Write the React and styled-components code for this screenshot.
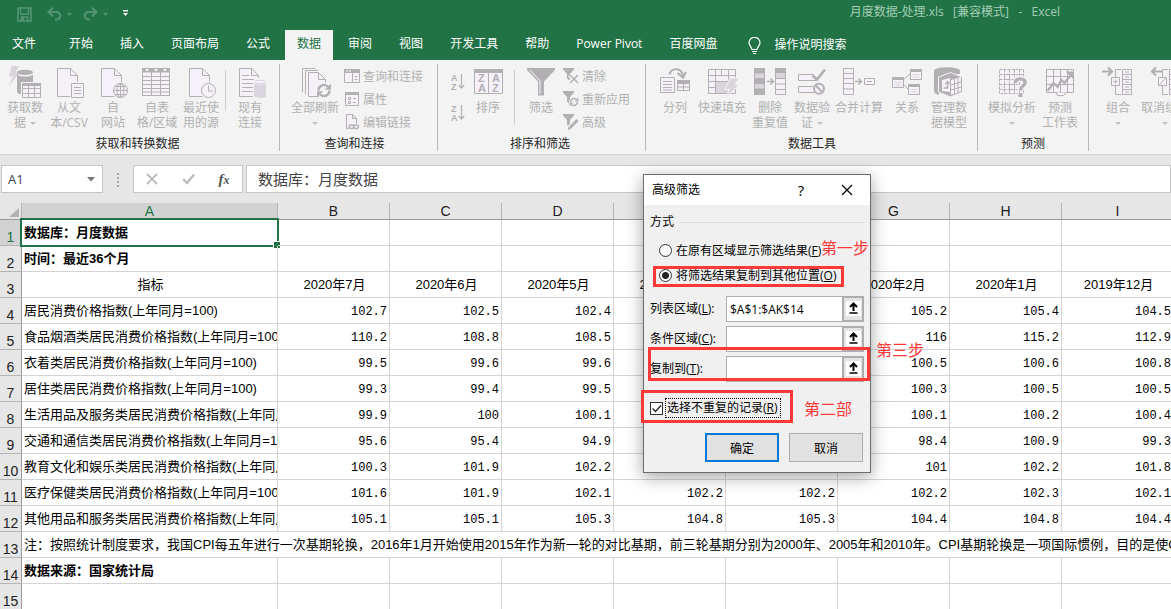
import { useState } from "react";
import styled, { createGlobalStyle } from "styled-components";

const UI_FONT = `"Open Sans", "Noto Sans CJK SC", sans-serif`;
const CELL_FONT = `"Liberation Sans", "Noto Sans CJK SC", sans-serif`;
const GREEN = "#217346";
const RED = "#fd3838";
const INK = "#b3b0b4";
const PALE = "#f6f1f8";
const SOFT = "#dad4dc";

const GlobalStyle = createGlobalStyle`
    * {
        box-sizing: border-box;
    }

    body {
        margin: 0;
        overflow: hidden;
        font-family: ${UI_FONT};
        font-size: 12px;
    }

    button, input {
        font: inherit;
        color: inherit;
    }

    button {
        padding: 0;
        border: 0;
        background: none;
    }
`;

const Window = styled.div`
    position: relative;
    display: flex;
    flex-direction: column;
    height: 100vh;
    background: white;
`;

/* title bar */

const TitleBar = styled.header`
    display: flex;
    align-items: center;
    justify-content: space-between;
    height: 30px;
    padding: 0 111px 6px 17px;
    background: ${GREEN};
`;

const QuickAccess = styled.div`
    display: flex;
    align-items: center;
    gap: 4px;
    padding-top: 4px;
`;

const QuickButton = styled.button`
    display: flex;
    margin-right: ${(props) => props.$space || 0}px;
    color: ${(props) => (props.$active ? "white" : "#569574")};
`;

const Title = styled.span`
    color: #a3cdb5;
    line-height: 20px;
    white-space: pre;
`;

/* tabs */

const TabBar = styled.nav`
    display: flex;
    gap: 3px;
    height: 30px;
    background: ${GREEN};
`;

const Tab = styled.button`
    flex: none;
    padding: 0 12px 3px;
    margin-right: ${(props) => props.$space || 0}px;
    color: ${(props) => (props.$active ? GREEN : "white")};
    background: ${(props) => (props.$active ? "#f3f3f3" : "transparent")};
    line-height: 27px;
    white-space: nowrap;
`;

const TellMe = styled.button`
    display: flex;
    align-items: center;
    gap: 13px;
    margin-left: 16px;
    padding-bottom: 3px;
    color: white;
    white-space: nowrap;

    svg {
        margin-top: 4px;
    }
`;

/* ribbon */

const Ribbon = styled.div`
    display: flex;
    flex: none;
    height: 95px;
    padding-top: 4px;
    overflow: hidden;
    background: #f3f3f3;
    border-bottom: 1px solid #d2d0d2;
`;

const Group = styled.section`
    display: flex;
    flex: none;
    flex-direction: column;
    justify-content: space-between;
    height: 87px;
    padding: 0 ${(props) => props.$right}px 0 ${(props) => props.$left}px;
    border-right: 1px solid #b8b8b8;

    &:last-child {
        border-right: 0;
    }
`;

const GroupBody = styled.div`
    display: flex;
`;

const GroupName = styled.div`
    color: #262626;
    line-height: 15px;
    text-align: center;
`;

const BigButton = styled.button`
    display: flex;
    flex: none;
    flex-direction: column;
    align-items: center;
    width: ${(props) => props.$width}px;
    padding-top: 2px;
    color: #b1b1b1;
    line-height: 15px;
    white-space: nowrap;

    svg {
        margin-bottom: 2px;
    }
`;

const SmallColumn = styled.div`
    display: flex;
    flex-direction: column;
`;

const SmallButton = styled.button`
    display: flex;
    align-items: center;
    gap: 3px;
    height: 23px;
    color: #b1b1b1;
    white-space: nowrap;
`;

const SortColumn = styled.div`
    display: flex;
    flex-direction: column;
    gap: 12px;
    padding-top: 8px;
`;

const SortButton = styled.button`
    display: flex;
`;

const Divider = styled.div`
    width: 1px;
    height: ${(props) => props.$height}px;
    margin: 6px ${(props) => props.$space}px 0;
    background: #d0ced0;
`;

const Caret = styled.i`
    display: inline-block;
    margin-left: ${(props) => (props.$alone ? 0 : 4)}px;
    border: 3px solid transparent;
    border-top-color: #c2c0c2;
    border-bottom: 0;
    vertical-align: middle;
`;

/* formula bar */

const FormulaBar = styled.div`
    display: flex;
    flex: none;
    align-items: flex-start;
    height: 48px;
    padding: 10px 0 0 1px;
    background: #e6e6e6;
    color: #444;
`;

const BarBox = styled.div`
    display: flex;
    align-items: center;
    flex: ${(props) => (props.$grow ? "1" : "none")};
    width: ${(props) => (props.$width ? `${props.$width}px` : "auto")};
    height: 28px;
    margin-left: ${(props) => (props.$grow ? 3 : 0)}px;
    background: white;
    border: 1px solid #c6c6c6;
`;

const NameInput = styled.input`
    width: 78px;
    padding: 0 0 0 6px;
    border: 0;
    outline: 0;
    background: transparent;
    font-size: 13px;
`;

const DropButton = styled.button`
    display: flex;
    justify-content: center;
    width: 22px;
`;

const Dots = styled.div`
    display: flex;
    flex-direction: column;
    align-items: center;
    gap: 2px;
    width: 30px;
    padding-top: 8px;

    i {
        width: 2px;
        height: 2px;
        background: #a8a8a8;
    }
`;

const BarButton = styled.button`
    display: flex;
    flex: 1;
    justify-content: center;
    color: #bdbdbd;
`;

const FunctionMark = styled.span`
    color: #555;
    font: italic bold 15px/20px "Liberation Serif", serif;

    small {
        font-size: 12px;
    }
`;

const FormulaInput = styled.input`
    width: 100%;
    padding: 0 0 2px 11px;
    border: 0;
    outline: 0;
    background: transparent;
    font-size: 15px;
`;

/* sheet */

const SheetArea = styled.main`
    flex: 1;
    min-height: 0;
    overflow: hidden;
`;

const Sheet = styled.table`
    width: 100%;
    min-width: 1174px;
    table-layout: fixed;
    border-collapse: separate;
    border-spacing: 0;
    font-family: ${CELL_FONT};
    font-size: 13px;
    color: black;
`;

const Col = styled.col`
    width: ${(props) => props.$width}px;
`;

const ColumnHead = styled.th`
    height: 17px;
    padding: 0;
    background: ${(props) => (props.$active ? "#d2d2d2" : "#e6e6e6")};
    border-right: 1px solid #b4b4b4;
    border-bottom: 1px solid #9b9b9b;
    color: ${(props) => (props.$active ? GREEN : "#222")};
    font-size: 14px;
    font-weight: normal;
    line-height: 16px;

    svg {
        display: block;
        margin: 4px 0 0 8px;
    }
`;

const RowHead = styled.th`
    height: 26px;
    padding: 0;
    background: ${(props) => (props.$active ? "#d2d2d2" : "#e6e6e6")};
    border-right: 1px solid #9b9b9b;
    border-bottom: 1px solid #b4b4b4;
    color: ${(props) => (props.$active ? GREEN : "#222")};
    font-size: 14px;
    font-weight: normal;
    line-height: 16px;
    text-align: center;
    vertical-align: bottom;
`;

const Cell = styled.td`
    position: relative;
    height: 26px;
    padding: ${(props) => (props.$align === "right" ? "0 2px" : "0 0 0 2px")};
    border-right: 1px solid #d4d4d4;
    border-bottom: 1px solid #d4d4d4;
    font-weight: ${(props) => (props.$bold ? "bold" : "normal")};
    text-align: ${(props) => props.$align || "left"};
`;

const CellText = styled.div`
    overflow: hidden;
    line-height: 20px;
    white-space: nowrap;
`;

const NumberText = styled.div`
    padding-top: 2px;
    font-family: "Liberation Mono", monospace;
    font-size: 12px;
    line-height: 20px;
`;

const Selection = styled.div`
    position: absolute;
    inset: -2px;
    border: 2px solid ${GREEN};

    &::after {
        content: "";
        position: absolute;
        right: -3px;
        bottom: -3px;
        width: 6px;
        height: 6px;
        background: ${GREEN};
        border: solid white;
        border-width: 1px 0 0 1px;
    }
`;

/* dialog */

const Dialog = styled.div`
    position: absolute;
    top: 174px;
    left: 643px;
    width: 228px;
    background: #f0f0f0;
    border: 1px solid #6c6c6c;
    box-shadow: 0 4px 16px rgba(0, 0, 0, 0.36);
    color: black;
`;

const DialogTitle = styled.div`
    display: flex;
    align-items: center;
    height: 30px;
    padding-left: 8px;
    background: white;

    h2 {
        flex: 1;
        margin: 0;
        font-size: 12px;
        font-weight: normal;
        line-height: 18px;
    }
`;

const DialogTool = styled.button`
    display: flex;
    align-items: center;
    justify-content: center;
    width: 46px;
    height: 30px;
    font-size: 15px;
`;

const DialogBody = styled.form`
    padding: 8px 6px 10px;
`;

const Mode = styled.fieldset`
    min-width: 0;
    margin: 0 0 8px;
    padding: 0;
    border: 0;

    legend {
        width: 100%;
        padding: 0;
        margin-bottom: 7px;
    }
`;

const ModeName = styled.span`
    display: flex;
    align-items: center;
    gap: 5px;
    line-height: 18px;

    &::after {
        content: "";
        flex: 1;
        height: 1px;
        background: #dcdcdc;
    }
`;

const RadioRow = styled.label`
    display: flex;
    align-items: center;
    gap: 4px;
    height: 25px;
    padding-left: 9px;
    line-height: 18px;
    white-space: nowrap;
`;

const Radio = styled.input`
    appearance: none;
    flex: none;
    width: 13px;
    height: 13px;
    margin: 0;
    background: white;
    border: 1px solid #333;
    border-radius: 50%;

    &:checked {
        background: radial-gradient(circle, #222 3px, white 4px);
    }
`;

const Fields = styled.div`
    display: grid;
    gap: 4px;
`;

const Field = styled.div`
    display: flex;
    align-items: center;
    min-width: 0;
    height: 26px;

    label {
        flex: none;
        width: 76px;
        line-height: 18px;
        white-space: nowrap;
    }
`;

const RangeBox = styled.div`
    display: flex;
    flex: 1;
    min-width: 0;
    height: 26px;
    background: white;
    border: 1px solid #adadb0;
`;

const RangeInput = styled.input`
    flex: 1;
    min-width: 0;
    padding: 0 3px;
    border: 0;
    outline: 0;
    background: white;
`;

const RangeButton = styled.button`
    display: flex;
    flex: none;
    align-items: center;
    justify-content: center;
    width: 21px;
    background: #e4e4e4;
    border: solid #adadb0;
    border-width: 1px 1px 1px 2px;

    svg {
        margin-bottom: 2px;
        background: white;
    }
`;

const CheckRow = styled.label`
    display: flex;
    align-items: center;
    gap: 3px;
    height: 20px;
    margin-top: 16px;
`;

const CheckText = styled.span`
    padding: 0 2px 0 1px;
    outline: 1px dotted black;
    line-height: 18px;
`;

const CheckBox = styled.span`
    display: grid;

    input {
        appearance: none;
        grid-area: 1 / 1;
        width: 13px;
        height: 13px;
        margin: 0;
        background: white;
        border: 1px solid #333;
    }

    svg {
        grid-area: 1 / 1;
        pointer-events: none;
    }

    input:not(:checked) + svg {
        display: none;
    }
`;

const Actions = styled.div`
    display: flex;
    justify-content: flex-end;
    gap: 10px;
    margin-top: 15px;
    padding-right: 1px;
`;

const ActionButton = styled.button`
    width: 74px;
    height: 29px;
    background: #e1e1e1;
    border: ${(props) => (props.$primary ? "2px solid #0078d7" : "1px solid #adadad")};
`;

const Frame = styled.div`
    position: absolute;
    top: ${(props) => props.$top}px;
    left: ${(props) => props.$left}px;
    width: ${(props) => props.$width}px;
    height: ${(props) => props.$height}px;
    border: 3px solid ${RED};
    pointer-events: none;
`;

const Step = styled.div`
    position: absolute;
    top: ${(props) => props.$top}px;
    left: ${(props) => props.$left}px;
    color: ${RED};
    font-size: 16px;
    line-height: 18px;
    white-space: nowrap;
    pointer-events: none;
`;

/* icons */

const Icon = ({ size = 32, width, height, children }) => (
    <svg
        width={width || size}
        height={height || size}
        viewBox={`0 0 ${width || size} ${height || size}`}
        fill="none"
        stroke={INK}
        aria-hidden="true"
    >
        {children}
    </svg>
);

const Page = ({ x = 4.5, y = 2.5, w = 20, h = 28 }) => (
    <>
        <path d={`M${x} ${y}h${w - 7}l7 7v${h - 7}h-${w}z`} fill={PALE} />
        <path d={`M${x + w - 7} ${y}v7h7`} />
    </>
);

const Refresh = ({ x, y, r = 5.5 }) => (
    <g transform={`translate(${x} ${y}) scale(${r / 5.5})`}>
        <circle r="8" fill="#f3f3f3" stroke="none" />
        <path d="M-5.5 0A5.5 5.5 0 0 1 4 -3.8M5.5 0A5.5 5.5 0 0 1 -4 3.8" strokeWidth="2.4" />
        <path d="M7 -7v6.2h-6.2zM-7 7v-6.2h6.2z" fill={INK} stroke="none" />
    </g>
);

const GetDataIcon = () => (
    <Icon>
        <path d="M2.5 0h7.5l-3.4 6.5h4L.3 19.5 3.8 10.5H0z" fill={SOFT} stroke="none" />
        <path d="M8 8c0 3.4 16 3.4 16 0v18c0 3.4-16 3.4-16 0z" fill={INK} stroke="none" />
        <ellipse cx="16" cy="6.4" rx="8" ry="2.7" fill={INK} stroke="none" />
        <path d="M12 16h20v16H12z" fill="#f3f3f3" stroke="none" />
        <path d="M13.5 18.5h18v13h-18zM19.5 18.5v13M25.5 18.5v13M13.5 22.5h18M13.5 27.5h18" fill={PALE} />
        <path d="M13 17h19v3H13z" fill={INK} stroke="none" />
    </Icon>
);

const TextFileIcon = () => (
    <Icon>
        <Page />
        <path d="M17 16h15v16H17z" fill="#f3f3f3" stroke="none" />
        <path d="M18.5 17.5h12v14h-12z" fill={PALE} />
        <path d="M21 21.5h7M21 24.5h7M21 27.5h7" />
    </Icon>
);

const WebIcon = () => (
    <Icon>
        <Page />
        <circle cx="23.5" cy="24.5" r="8.4" fill="#f3f3f3" stroke="none" />
        <circle cx="23.5" cy="24.5" r="7" fill={PALE} />
        <path d="M16.5 24.5h14M23.5 17.5v14M18 20.5h11M18 28.5h11" />
        <ellipse cx="23.5" cy="24.5" rx="3.5" ry="7" />
    </Icon>
);

const TableIcon = () => (
    <Icon>
        <path
            d="M1.5 2.5h27v27h-27zM10.5 6v23.5M19.5 6v23.5M1.5 10.5h27M1.5 14.5h27M1.5 18.5h27M1.5 22.5h27M1.5 26h27"
            fill={PALE}
        />
        <path d="M1 2h28v4.5H1z" fill={INK} stroke="none" />
        <path d="M4 3h4l-2 2.5zM13 3h4l-2 2.5zM22 3h4l-2 2.5z" fill="white" stroke="none" />
    </Icon>
);

const RecentIcon = () => (
    <Icon>
        <Page />
        <circle cx="23.5" cy="24.5" r="8.4" fill="#f3f3f3" stroke="none" />
        <circle cx="23.5" cy="24.5" r="7" fill={PALE} />
        <path d="M23.5 19.5v5.5h4.5" />
    </Icon>
);

const ConnectionIcon = () => (
    <Icon>
        <Page x={5.5} w={19} />
        <path d="M8 9.5h7M8 13.5h13M8 17.5h11M8 21.5h11M8 25.5h11" />
        <path d="M19 15c0-4 13-4 13 0v17H19z" fill="#f3f3f3" stroke="none" />
        <path d="M20 17c0 2 12 2 12 0v13c0 2.3-12 2.3-12 0z" fill={SOFT} stroke="none" />
        <ellipse cx="26" cy="16" rx="5.5" ry="1.8" fill={PALE} stroke={SOFT} />
    </Icon>
);

const RefreshAllIcon = () => (
    <Icon>
        <path d="M3.5 26V2.5h13M6.5 28.5v-24h13" />
        <Page x={9.5} y={6.5} w={17} h={24} />
        <Refresh x={25} y={24.5} />
    </Icon>
);

const QueriesIcon = () => (
    <Icon size={16}>
        <path d="M.5 2.5h15v12H.5z" fill={PALE} />
        <path d="M0 1h16v4H0z" fill={INK} stroke="none" />
        <path d="M2 3h2M5 3h2" stroke="white" />
        <path d="M8.5 5v9.5M10.5 8.5h3M10.5 11.5h3" />
    </Icon>
);

const PropertiesIcon = () => (
    <Icon size={16}>
        <path d="M1.5 1.5h13v13h-13z" fill={PALE} />
        <path d="M1 1h14v3H1z" fill={INK} stroke="none" />
        <path d="M4.5 6.5h2v2h-2zM4.5 10.5h2v2h-2zM9 7.5h3M9 11.5h3" />
    </Icon>
);

const LinksIcon = () => (
    <Icon size={16}>
        <path d="M2.5 14.5v-14h6l4 4v5M8.5.5v4h4M2.5 14.5h2" fill={PALE} />
        <rect x="5" y="11" width="5" height="3.5" rx="1.7" strokeWidth="1.5" />
        <rect x="9.5" y="11" width="5" height="3.5" rx="1.7" strokeWidth="1.5" />
    </Icon>
);

const SortIcon = ({ first, second }) => (
    <Icon width={16} height={19}>
        <g fill={INK} stroke="none" fontFamily="Liberation Sans, sans-serif" fontSize="9" fontWeight="bold">
            <text x="1" y="9">{first}</text>
            <text x="1" y="18">{second}</text>
        </g>
        <path d="M11.5 2v14M8.8 13l2.7 3 2.7-3" strokeWidth="1.2" />
    </Icon>
);

const SortDialogIcon = () => (
    <Icon>
        <path d="M2.5 3.5h28v24h-28zM16.5 4v23.5" fill={PALE} />
        <path d="M2 3h29v4H2z" fill={INK} stroke="none" />
        <g fill={INK} stroke="none" fontFamily="Liberation Sans, sans-serif" fontSize="11" fontWeight="bold">
            <text x="6" y="16">Z</text>
            <text x="6" y="26">A</text>
            <text x="20" y="16">A</text>
            <text x="20" y="26">Z</text>
        </g>
    </Icon>
);

const FilterIcon = () => (
    <Icon>
        <path d="M2 2h28v2L19 15.5V29.5h-6V15.5L2 4z" fill={INK} stroke="none" />
        <path d="M5 4l10 11v13" stroke={PALE} />
    </Icon>
);

const SmallFunnel = () => (
    <path d="M0 0h11v1.5L7 6v7L4 10.5V6L0 1.5z" fill={INK} stroke="none" />
);

const ClearIcon = () => (
    <Icon size={16}>
        <SmallFunnel />
        <path d="M6.5 7l8 7.5M14.5 7l-8 7.5" stroke="#f3f3f3" strokeWidth="4" />
        <path d="M7 7l8 8M15 7l-8 8" strokeWidth="1.5" />
    </Icon>
);

const ReapplyIcon = () => (
    <Icon size={16}>
        <SmallFunnel />
        <Refresh x={11} y={11} r={3.5} />
    </Icon>
);

const AdvancedIcon = () => (
    <Icon size={16}>
        <SmallFunnel />
        <path d="M5.5 15.5L15 5.5" stroke="#f3f3f3" strokeWidth="6" />
        <path d="M7 13.8L14.5 6" strokeWidth="3" />
        <path d="M4.5 16l1-3.5 2.5 2.5z" fill={INK} stroke="none" />
    </Icon>
);

const SplitIcon = () => (
    <Icon>
        <path d="M10.5 8.5c1-6.5 12-8 13.5 1.5" strokeWidth="2.2" />
        <path d="M18.5 7l5.5 4.5L27 6" strokeWidth="2.2" />
        <path d="M1.5 11.5h14v15h-14z" fill={PALE} />
        <path d="M4 15.5h9M4 18.5h9M4 21.5h9M4 24h9" />
        <path d="M18.5 14.5h12v10h-12zM24.5 15v9.5M18.5 21h12" fill={PALE} />
        <path d="M18 14h13v4H18z" fill={INK} stroke="none" />
    </Icon>
);

const FlashFillIcon = () => (
    <Icon>
        <path
            d="M2.5 3.5h27v24h-27zM9.5 3.5v24M22.5 3.5v6M2.5 9.5h27M2.5 15.5h27M2.5 21.5h20M15.5 3.5v6"
            fill={PALE}
        />
        <path d="M10 16h12v11H10z" fill={SOFT} stroke="none" />
        <path d="M9.5 9.5h13v6h-13z" fill={PALE} />
        <path d="M24 12h9l-4 7h4L20 32l3.5-8.5H19z" fill={SOFT} stroke="#f3f3f3" />
    </Icon>
);

const RemoveDuplicatesIcon = () => (
    <Icon>
        <path d="M0 2h11v27H0z" fill={INK} stroke="none" />
        <path d="M1 7.5h9v4.5H1zM1 18h9v4.5H1z" fill={SOFT} stroke="none" />
        <path d="M13 15.5h6M16.5 12.5l3 3-3 3" strokeWidth="1.5" />
        <path d="M21.5 2.5h10v26h-10zM21.5 12.5h10M21.5 18h10M21.5 23.5h10" fill={PALE} />
        <path d="M21 2h11v5.5H21z" fill={INK} stroke="none" />
        <path d="M22 7.5h9V12h-9z" fill={SOFT} stroke="none" />
    </Icon>
);

const ValidationIcon = () => (
    <Icon>
        <path d="M18 8.5H2.5v6H20M17 20.5H2.5v6H18" fill={PALE} />
        <path d="M16.5 9.5l4.5 4L29 3.5" strokeWidth="2.8" />
        <circle cx="23" cy="22.8" r="5" fill={PALE} strokeWidth="2" />
        <path d="M19.5 19.3l7 7" strokeWidth="2" />
    </Icon>
);

const ConsolidateIcon = () => (
    <Icon>
        <path d="M.5 2.5h10v26H.5zM.5 7.5h10M.5 12.5h10M.5 17.5h10M.5 23h10" fill={PALE} />
        <path d="M12 15.5h6M15.5 12.5l3 3-3 3" strokeWidth="1.5" />
        <path d="M21.5 12.5h10v6h-10z" fill={PALE} />
        <path d="M24 15.5h5" />
    </Icon>
);

const RelationWindow = ({ x, y }) => (
    <g transform={`translate(${x} ${y})`}>
        <path d="M.5.5h11v10H.5z" fill={PALE} />
        <path d="M0 0h12v3H0z" fill={INK} stroke="none" />
        <path d="M2.5 5.5h7M2.5 8h7" stroke={SOFT} />
    </g>
);

const RelationIcon = () => (
    <Icon>
        <path d="M12 14l7-6M12 18l6 6" />
        <RelationWindow x={1} y={11} />
        <RelationWindow x={19} y={3} />
        <RelationWindow x={17} y={18} />
    </Icon>
);

const ModelIcon = () => (
    <Icon>
        <path d="M1 5C1 0 27 0 27 5v3H15L6 12v17c-3-1-5-2-5-4z" fill={INK} stroke="none" />
        <path d="M5.5 11l12-4.5 12 4.5v15l-12 5-12-5z" fill={INK} stroke="#f3f3f3" />
        <path d="M18 14l10-3v14l-10 4z" fill={PALE} stroke="none" />
        <path d="M18 19l10-3M18 24l10-3M21.5 13v15M25 12v14.5" />
        <path d="M9 14l8-2v14l-8-1z" fill={PALE} stroke="none" />
        <path d="M10.5 22h4v-6M12.3 18l2.2-2.5 2 2.5" strokeWidth="1.4" />
    </Icon>
);

const WhatIfIcon = () => (
    <Icon>
        <path
            d="M3.5 3.5h24v24h-24zM8.5 3.5v24M13.5 3.5v24M18.5 3.5v24M23.5 3.5v24M3.5 8.5h24M3.5 13.5h24M3.5 18.5h24M3.5 23.5h24"
            fill={PALE}
            strokeDasharray="3 1"
        />
        <path d="M8.5 8.5h5v5h-5zM13.5 18.5h5v5h-5z" />
        <path d="M19 17c1-6 11-5 10 0-.5 3-4.5 3-4.5 7.5M24.5 27v4" stroke="#f3f3f3" strokeWidth="6" />
        <path d="M19 17c1-6 11-5 10 0-.5 3-4.5 3-4.5 7.5" strokeWidth="3.4" />
        <path d="M22.5 27h4v4h-4z" fill={INK} stroke="none" />
    </Icon>
);

const ForecastIcon = () => (
    <Icon>
        <path d="M2.5 3.5h27v23h-27zM9.5 3.5v23M16.5 3.5v23M23.5 3.5v23M2.5 10.5h27M2.5 18.5h27" fill={PALE} />
        <path d="M12 26.5l1.5 3h6l3-3" fill={PALE} />
        <path d="M3.5 25l6-8 4 4 4-7 3 3 7-9" strokeWidth="2.2" />
        <path d="M21.5 5.5H29V13z" fill={INK} stroke="none" />
    </Icon>
);

const GroupIcon = ({ remove }) => (
    <Icon>
        {remove ? (
            <path d="M13 5.5H3M7 1.5l-4 4 4 4" strokeWidth="2.2" />
        ) : (
            <path d="M0 5.5h9M6 1.5l4 4-4 4" strokeWidth="2.2" />
        )}
        <path d="M19 3.5h-5.5V11M13.5 20v8.5H19" />
        <path d="M9.5 11.5h8v8h-8z" fill={PALE} />
        <path d={remove ? "M10.5 18.5l6-6" : "M11.5 15.5h4M13.5 13.5v4"} />
        <path d="M20.5 3.5h9v25h-9zM20.5 8.5h9M20.5 13.5h9M20.5 18.5h9M20.5 23.5h9" fill={PALE} />
        <path d="M23 6h4M23 11h4M23 16h4M23 21h4M23 26h4" />
    </Icon>
);

const SaveIcon = () => (
    <svg width="15" height="15" fill="none" stroke="currentColor" strokeWidth="1.5">
        <path d="M1 1h13v13H1zM3.5 1v6h8V1M4.5 14v-4h6v4" />
        <path d="M5 11h2v2H5z" fill="currentColor" stroke="none" />
    </svg>
);

const UndoIcon = ({ flip }) => (
    <svg width="15" height="14" fill="none" stroke="currentColor" strokeWidth="2">
        <g transform={flip ? "translate(15 0) scale(-1 1)" : undefined}>
            <path d="M6 .8L1.5 5 6 9.2M2 5h7c6 0 6 7.5-1 7.5" />
        </g>
    </svg>
);

const DownIcon = ({ bar }) => (
    <svg width="7" height="8" fill="currentColor">
        {bar && <path d="M1 0h5v1.5H1z" />}
        <path d="M1 3h5L3.5 6z" />
    </svg>
);

const BulbIcon = () => (
    <svg width="13" height="18" fill="none" stroke="currentColor" strokeWidth="1.2">
        <path d="M4 12.5C4 10 1 9 1 5.8a5.3 5.3 0 0 1 11 0C12 9 9 10 9 12.5zM4 14.5h5M5 16.5h3" />
    </svg>
);

/* data */

const TABS = ["文件", "开始", "插入", "页面布局", "公式", "数据", "审阅", "视图", "开发工具", "帮助", "Power Pivot", "百度网盘"];

const COLUMNS = ["A", "B", "C", "D", "E", "F", "G", "H", "I"];

const ROWS = [
    { label: "数据库：月度数据", bold: true },
    { label: "时间：最近36个月", bold: true },
    {
        label: "指标",
        heading: true,
        values: ["2020年7月", "2020年6月", "2020年5月", "2020年4月", "", "2020年2月", "2020年1月", "2019年12月"],
    },
    { label: "居民消费价格指数(上年同月=100)", values: ["102.7", "102.5", "102.4", "", "", "105.2", "105.4", "104.5"] },
    { label: "食品烟酒类居民消费价格指数(上年同月=100)", values: ["110.2", "108.8", "108.5", "", "", "116", "115.2", "112.9"] },
    { label: "衣着类居民消费价格指数(上年同月=100)", values: ["99.5", "99.6", "99.6", "", "", "100.5", "100.6", "100.8"] },
    { label: "居住类居民消费价格指数(上年同月=100)", values: ["99.3", "99.4", "99.5", "", "", "100.3", "100.5", "100.5"] },
    { label: "生活用品及服务类居民消费价格指数(上年同月=100)", values: ["99.9", "100", "100.1", "", "", "100.1", "100.2", "100.4"] },
    { label: "交通和通信类居民消费价格指数(上年同月=100)", values: ["95.6", "95.4", "94.9", "", "", "98.4", "100.9", "99.3"] },
    { label: "教育文化和娱乐类居民消费价格指数(上年同月=100)", values: ["100.3", "101.9", "102.2", "", "", "101", "102.2", "101.8"] },
    { label: "医疗保健类居民消费价格指数(上年同月=100)", values: ["101.6", "101.9", "102.1", "102.2", "102.2", "102.2", "102.3", "102.1"] },
    { label: "其他用品和服务类居民消费价格指数(上年同月=100)", values: ["105.1", "105.1", "105.3", "104.8", "105.3", "104.4", "104.8", "104.4"] },
    {
        label: "注：按照统计制度要求，我国CPI每五年进行一次基期轮换，2016年1月开始使用2015年作为新一轮的对比基期，前三轮基期分别为2000年、2005年和2010年。CPI基期轮换是一项国际惯例，目的是使C",
        wide: true,
    },
    { label: "数据来源：国家统计局", bold: true },
    { label: "" },
];

const RibbonButton = ({ icon, lines, width = 44, caret }) => (
    <BigButton type="button" $width={width}>
        {icon}
        <span>{lines[0]}</span>
        {(lines[1] || caret) && (
            <span>
                {lines[1]}
                {caret && <Caret $alone={!lines[1]} />}
            </span>
        )}
    </BigButton>
);

const RibbonComponent = () => (
    <Ribbon>
        <Group $left={3} $right={7}>
            <GroupBody>
                <RibbonButton icon={<GetDataIcon />} lines={["获取数", "据"]} caret />
                <RibbonButton icon={<TextFileIcon />} lines={["从文", "本/CSV"]} />
                <RibbonButton icon={<WebIcon />} lines={["自", "网站"]} />
                <RibbonButton icon={<TableIcon />} lines={["自表", "格/区域"]} />
                <RibbonButton icon={<RecentIcon />} lines={["最近使", "用的源"]} />
                <Divider $height={41} $space={2} />
                <RibbonButton icon={<ConnectionIcon />} lines={["现有", "连接"]} />
            </GroupBody>
            <GroupName>获取和转换数据</GroupName>
        </Group>

        <Group $left={6} $right={14}>
            <GroupBody>
                <RibbonButton icon={<RefreshAllIcon />} lines={["全部刷新"]} width={58} caret />
                <SmallColumn>
                    <SmallButton type="button"><QueriesIcon />查询和连接</SmallButton>
                    <SmallButton type="button"><PropertiesIcon />属性</SmallButton>
                    <SmallButton type="button"><LinksIcon />编辑链接</SmallButton>
                </SmallColumn>
            </GroupBody>
            <GroupName>查询和连接</GroupName>
        </Group>

        <Group $left={12} $right={15}>
            <GroupBody>
                <SortColumn>
                    <SortButton type="button"><SortIcon first="A" second="Z" /></SortButton>
                    <SortButton type="button"><SortIcon first="Z" second="A" /></SortButton>
                </SortColumn>
                <RibbonButton icon={<SortDialogIcon />} lines={["排序"]} />
                <Divider $height={55} $space={4} />
                <RibbonButton icon={<FilterIcon />} lines={["筛选"]} />
                <SmallColumn>
                    <SmallButton type="button"><ClearIcon />清除</SmallButton>
                    <SmallButton type="button"><ReapplyIcon />重新应用</SmallButton>
                    <SmallButton type="button"><AdvancedIcon />高级</SmallButton>
                </SmallColumn>
            </GroupBody>
            <GroupName>排序和筛选</GroupName>
        </Group>

        <Group $left={9} $right={8}>
            <GroupBody>
                <RibbonButton icon={<SplitIcon />} lines={["分列"]} width={40} />
                <RibbonButton icon={<FlashFillIcon />} lines={["快速填充"]} width={54} />
                <RibbonButton icon={<RemoveDuplicatesIcon />} lines={["删除", "重复值"]} width={42} />
                <RibbonButton icon={<ValidationIcon />} lines={["数据验", "证"]} width={42} caret />
                <RibbonButton icon={<ConsolidateIcon />} lines={["合并计算"]} width={52} />
                <RibbonButton icon={<RelationIcon />} lines={["关系"]} />
                <RibbonButton icon={<ModelIcon />} lines={["管理数", "据模型"]} width={40} />
            </GroupBody>
            <GroupName>数据工具</GroupName>
        </Group>

        <Group $left={7} $right={7}>
            <GroupBody>
                <RibbonButton icon={<WhatIfIcon />} lines={["模拟分析"]} width={54} caret />
                <RibbonButton icon={<ForecastIcon />} lines={["预测", "工作表"]} width={42} />
            </GroupBody>
            <GroupName>预测</GroupName>
        </Group>

        <Group $left={9} $right={0}>
            <GroupBody>
                <RibbonButton icon={<GroupIcon />} lines={["组合"]} width={40} caret />
                <RibbonButton icon={<GroupIcon remove />} lines={["取消组合"]} width={54} caret />
            </GroupBody>
        </Group>
    </Ribbon>
);

const SheetComponent = () => (
    <SheetArea>
        <Sheet>
            <colgroup>
                <Col $width={22} />
                <Col $width={256} />
                {COLUMNS.slice(1).map((name) => <Col key={name} $width={112} />)}
                <col />
            </colgroup>
            <thead>
                <tr>
                    <ColumnHead>
                        <svg width="11" height="10"><path d="M11 0v9H1z" fill="#b4b4b4" /></svg>
                    </ColumnHead>
                    {COLUMNS.map((name) => (
                        <ColumnHead key={name} scope="col" $active={name === "A"}>{name}</ColumnHead>
                    ))}
                    <ColumnHead />
                </tr>
            </thead>
            <tbody>
                {ROWS.map((row, index) => (
                    <tr key={index}>
                        <RowHead scope="row" $active={index === 0}>{index + 1}</RowHead>
                        <Cell
                            colSpan={row.wide ? 10 : 1}
                            $bold={row.bold}
                            $align={row.heading ? "center" : "left"}
                        >
                            <CellText>{row.label}</CellText>
                            {index === 0 && <Selection />}
                        </Cell>
                        {!row.wide && COLUMNS.slice(1).map((name, i) => (
                            <Cell key={name} $align={row.heading ? "center" : "right"}>
                                {row.heading
                                    ? <CellText>{row.values[i]}</CellText>
                                    : <NumberText>{row.values?.[i]}</NumberText>}
                            </Cell>
                        ))}
                        {!row.wide && <Cell />}
                    </tr>
                ))}
            </tbody>
        </Sheet>
    </SheetArea>
);

const RangeField = ({ id, label, hotkey, value }) => (
    <Field>
        <label htmlFor={id}>{label}(<u>{hotkey}</u>):</label>
        <RangeBox>
            <RangeInput id={id} defaultValue={value} />
            <RangeButton type="button" aria-label={label}>
                <svg width="15" height="15" fill="none" stroke="black" strokeWidth="2">
                    <path d="M7.5 10V3M4 6l3.5-3.5L11 6" />
                    <path d="M3.5 12h8" strokeWidth="1.5" />
                </svg>
            </RangeButton>
        </RangeBox>
    </Field>
);

const FilterDialog = () => {
    const [mode, setMode] = useState("copy");
    const [unique, setUnique] = useState(true);

    return (
        <Dialog role="dialog" aria-labelledby="dialog-title">
            <DialogTitle>
                <h2 id="dialog-title">高级筛选</h2>
                <DialogTool type="button">?</DialogTool>
                <DialogTool type="button" aria-label="取消">
                    <svg width="12" height="12" stroke="black" strokeWidth="1.2">
                        <path d="M1 1l10 10M11 1L1 11" />
                    </svg>
                </DialogTool>
            </DialogTitle>

            <DialogBody onSubmit={(e) => e.preventDefault()}>
                <Mode>
                    <legend><ModeName>方式</ModeName></legend>
                    <RadioRow>
                        <Radio type="radio" name="mode" checked={mode === "inplace"} onChange={() => setMode("inplace")} />
                        <span>在原有区域显示筛选结果(<u>F</u>)</span>
                    </RadioRow>
                    <RadioRow>
                        <Radio type="radio" name="mode" checked={mode === "copy"} onChange={() => setMode("copy")} />
                        <span>将筛选结果复制到其他位置(<u>O</u>)</span>
                    </RadioRow>
                </Mode>

                <Fields>
                    <RangeField id="list-range" label="列表区域" hotkey="L" value="$A$1:$AK$14" />
                    <RangeField id="criteria-range" label="条件区域" hotkey="C" />
                    <RangeField id="copy-to" label="复制到" hotkey="T" />
                </Fields>

                <CheckRow>
                    <CheckBox>
                        <input type="checkbox" checked={unique} onChange={(e) => setUnique(e.target.checked)} />
                        <svg width="13" height="13" fill="none" stroke="#222" strokeWidth="1.3">
                            <path d="M2.5 6.5l3 3 5.5-6" />
                        </svg>
                    </CheckBox>
                    <CheckText>选择不重复的记录(<u>R</u>)</CheckText>
                </CheckRow>

                <Actions>
                    <ActionButton type="submit" $primary>确定</ActionButton>
                    <ActionButton type="button">取消</ActionButton>
                </Actions>
            </DialogBody>

            <Frame $top={91} $left={9} $width={191} $height={21} />
            <Frame $top={172} $left={4} $width={222} $height={34} />
            <Frame $top={215} $left={-3} $width={152} $height={33} />
            <Step $top={64} $left={177}>第一步</Step>
            <Step $top={225} $left={160}>第二部</Step>
            <Step $top={166} $left={232}>第三步</Step>
        </Dialog>
    );
};

const App = () => (
    <Window>
        <GlobalStyle />

        <TitleBar>
            <QuickAccess>
                <QuickButton type="button" aria-label="保存" $space={11}><SaveIcon /></QuickButton>
                <QuickButton type="button" aria-label="撤消"><UndoIcon /></QuickButton>
                <QuickButton type="button" aria-label="撤消列表" $space={6}><DownIcon /></QuickButton>
                <QuickButton type="button" aria-label="恢复"><UndoIcon flip /></QuickButton>
                <QuickButton type="button" aria-label="恢复列表" $space={9}><DownIcon /></QuickButton>
                <QuickButton type="button" aria-label="自定义" $active><DownIcon bar /></QuickButton>
            </QuickAccess>
            <Title>{"月度数据-处理.xls   [兼容模式]   -   Excel"}</Title>
        </TitleBar>

        <TabBar>
            {TABS.map((name) => (
                <Tab key={name} type="button" $active={name === "数据"} $space={name === "文件" ? 6 : 0}>
                    {name}
                </Tab>
            ))}
            <TellMe type="button"><BulbIcon />操作说明搜索</TellMe>
        </TabBar>

        <RibbonComponent />

        <FormulaBar>
            <BarBox $width={102}>
                <NameInput aria-label="名称框" defaultValue="A1" />
                <DropButton type="button" aria-label="名称列表">
                    <svg width="8" height="5"><path d="M0 0h8L4 4.5z" fill="#777" /></svg>
                </DropButton>
            </BarBox>
            <Dots><i /><i /><i /><i /></Dots>
            <BarBox $width={110}>
                <BarButton type="button" aria-label="取消">
                    <svg width="12" height="12" stroke="currentColor" strokeWidth="1.8">
                        <path d="M1 1l10 10M11 1L1 11" />
                    </svg>
                </BarButton>
                <BarButton type="button" aria-label="输入">
                    <svg width="13" height="12" fill="none" stroke="currentColor" strokeWidth="2.4">
                        <path d="M1 6l4 4 7-8.5" />
                    </svg>
                </BarButton>
                <BarButton type="button">
                    <FunctionMark>f<small>x</small></FunctionMark>
                </BarButton>
            </BarBox>
            <BarBox $grow>
                <FormulaInput aria-label="编辑栏" defaultValue="数据库：月度数据" />
            </BarBox>
        </FormulaBar>

        <SheetComponent />
        <FilterDialog />
    </Window>
);

export default App;
